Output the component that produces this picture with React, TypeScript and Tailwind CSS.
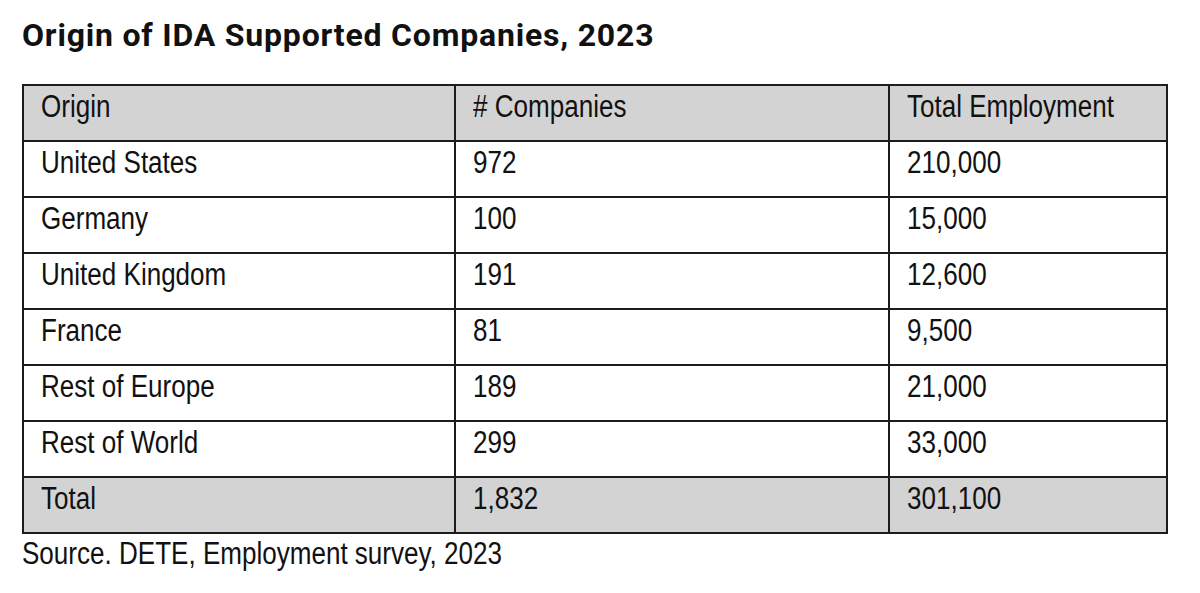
const rows = [
  { origin: 'United States', companies: '972', employment: '210,000' },
  { origin: 'Germany', companies: '100', employment: '15,000' },
  { origin: 'United Kingdom', companies: '191', employment: '12,600' },
  { origin: 'France', companies: '81', employment: '9,500' },
  { origin: 'Rest of Europe', companies: '189', employment: '21,000' },
  { origin: 'Rest of World', companies: '299', employment: '33,000' },
]

// Arial Narrow look: Liberation Sans squeezed horizontally
function Narrow({ children }: { children: React.ReactNode }) {
  return (
    <span className="inline-block origin-left scale-x-[0.84] whitespace-nowrap font-['Liberation_Sans',Arial,sans-serif]">
      {children}
    </span>
  )
}

function Cell({ children, last }: { children: React.ReactNode; last?: boolean }) {
  return (
    <div
      className={`h-[54px] overflow-hidden pl-[17px] text-[31px] leading-[38px] text-[#111] ${
        last ? '' : 'border-r-2 border-[#1c1c1c]'
      }`}
    >
      <Narrow>{children}</Narrow>
    </div>
  )
}

function Row({
  cells,
  shaded,
  first,
}: {
  cells: string[]
  shaded?: boolean
  first?: boolean
}) {
  return (
    <div
      className={`grid grid-cols-[432px_434px_1fr] ${first ? '' : 'border-t-2 border-[#1c1c1c]'} ${
        shaded ? 'bg-[#d3d3d3]' : 'bg-white'
      }`}
    >
      <Cell>{cells[0]}</Cell>
      <Cell>{cells[1]}</Cell>
      <Cell last>{cells[2]}</Cell>
    </div>
  )
}

export default function App() {
  return (
    <div className="h-[593px] w-[1200px] bg-white">
      <h1 className="pl-[22px] pt-[17px] font-['Roboto',sans-serif] text-[32px] font-bold leading-[36px] tracking-[0.8px] text-[#111]">
        Origin of IDA Supported Companies, 2023
      </h1>
      <div className="ml-[22px] mt-[31px] w-[1146px] border-2 border-[#1c1c1c]">
        <Row first shaded cells={['Origin', '# Companies', 'Total Employment']} />
        {rows.map((r) => (
          <Row key={r.origin} cells={[r.origin, r.companies, r.employment]} />
        ))}
        <Row shaded cells={['Total', '1,832', '301,100']} />
      </div>
      <p className="pl-[22px] text-[31px] leading-[36px] text-[#111]">
        <Narrow>Source. DETE, Employment survey, 2023</Narrow>
      </p>
    </div>
  )
}
